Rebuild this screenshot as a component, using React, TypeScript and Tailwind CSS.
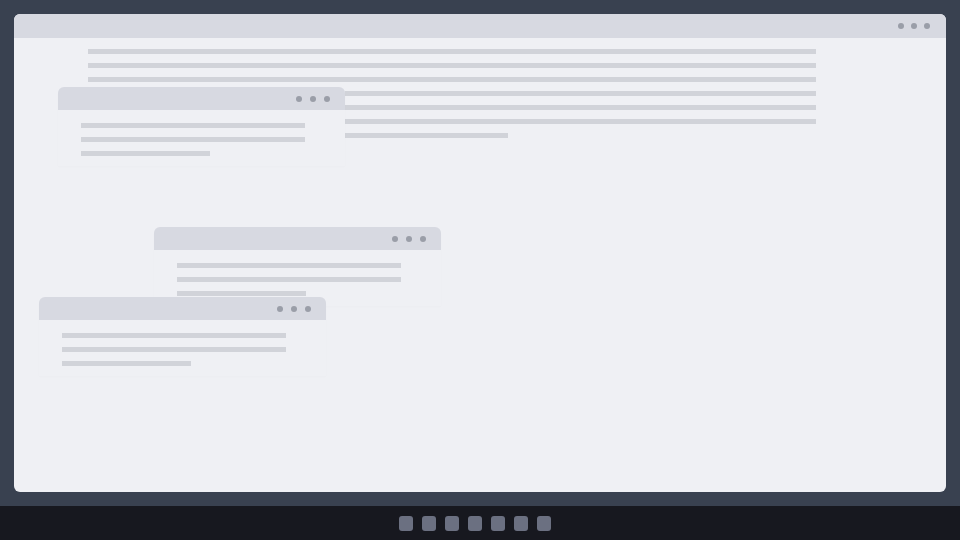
import React from 'react';

function Dots({ gap = 'gap-2', pr = 'pr-4' }: { gap?: string; pr?: string }) {
  return (
    <div className={`flex items-center ${gap} ${pr}`}>
      {[0, 1, 2].map((i) => (
        <span key={i} className="w-[6px] h-[6px] rounded-full bg-[#9a9ea8]" />
      ))}
    </div>
  );
}

interface FloatWinProps {
  pos: string;
}

function FloatWin({ pos }: FloatWinProps) {
  return (
    <div className={`absolute ${pos} w-[287px] rounded-t-md bg-[#eff0f4] shadow-[0_1px_2px_rgba(0,0,0,0.015)]`}>
      <div className="h-[23px] rounded-t-md bg-[#d7d9e1] flex items-center justify-end">
        <Dots pr="pr-[15px]" />
      </div>
      <div className="pl-[23px] pt-[13px] pb-[10px] flex flex-col gap-[9px]">
        <div className="w-[224px] h-[5px] bg-[#d1d3d9]" />
        <div className="w-[224px] h-[5px] bg-[#d1d3d9]" />
        <div className="w-[129px] h-[5px] bg-[#d1d3d9]" />
      </div>
    </div>
  );
}

export default function App() {
  const lines = [728, 728, 728, 728, 728, 728, 420];

  return (
    <div className="w-[960px] h-[540px] flex flex-col bg-[#394150] overflow-hidden">
      <div className="flex-1 p-[14px]">
        <div className="h-full rounded-md bg-[#eff0f4] flex flex-col overflow-hidden">
          <div className="h-[24px] bg-[#d7d9e1] flex items-center justify-end">
            <Dots gap="gap-[7px]" pr="pr-[16px]" />
          </div>
          <div className="relative flex-1">
            <div className="pl-[74px] pt-[11px] flex flex-col gap-[9px]">
              {lines.map((w, i) => (
                <div key={i} className="h-[5px] bg-[#d1d3d9]" style={{ width: w }} />
              ))}
            </div>
            <FloatWin pos="left-[44px] top-[49px]" />
            <FloatWin pos="left-[140px] top-[189px]" />
            <FloatWin pos="left-[25px] top-[259px]" />
          </div>
        </div>
      </div>
      <div className="h-[34px] bg-[#17181f] flex items-center justify-center pr-[10px] gap-[9px]">
        {[0, 1, 2, 3, 4, 5, 6].map((i) => (
          <span key={i} className="w-[14px] h-[15px] rounded-[3px] bg-[#6b7081]" />
        ))}
      </div>
    </div>
  );
}
